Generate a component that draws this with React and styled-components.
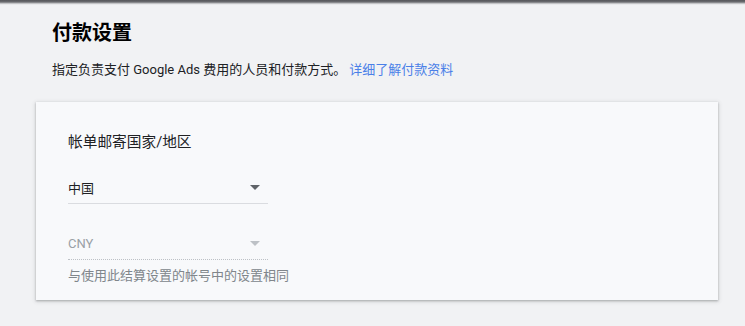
import React from "react";
import styled, { createGlobalStyle } from "styled-components";

const GlobalStyle = createGlobalStyle`
  body {
    margin: 0;
    background: #f1f2f4;
    font-family: Roboto, "Noto Sans CJK SC", sans-serif;
    color: #202124;
  }
`;

const Page = styled.div`
  width: 745px;
  height: 326px;
  display: flex;
  flex-direction: column;
  overflow: hidden;
`;

const TopShade = styled.div`
  height: 5px;
  background: linear-gradient(#55565a 0px, #6c6d71 2px, #a6a7aa 3px, #dfe0e2 4px, #f1f2f4 5px);
`;

const Content = styled.div`
  padding: 14px 27px 0 36px;
`;

const Header = styled.div`
  padding: 0 16px;
`;

const Title = styled.h1`
  margin: 0;
  font-size: 20px;
  line-height: 28px;
  font-weight: 700;
  color: #000;
`;

const Intro = styled.p`
  margin: 13px 0 0;
  font-size: 13px;
  line-height: 20px;
  color: #202124;
`;

const Link = styled.a`
  color: #4a80e8;
  text-decoration: none;
  margin-left: 3px;
`;

const Card = styled.div`
  margin-top: 22px;
  height: 198px;
  box-sizing: border-box;
  background: #f8f9fb;
  padding: 30px 32px 0;
  box-shadow: 0 1px 2px rgba(60, 64, 67, 0.35), 0 1px 4px 1px rgba(60, 64, 67, 0.12);
`;

const Label = styled.div`
  font-size: 14.7px;
  line-height: 20px;
  color: #202124;
`;

const Select = styled.div`
  width: 200px;
  height: 32px;
  margin-top: ${(p) => p.$top}px;
  box-sizing: border-box;
  display: flex;
  align-items: center;
  justify-content: space-between;
  padding-right: 8px;
  font-size: 13px;
  color: ${(p) => (p.$disabled ? "#9aa0a6" : "#202124")};
  border-bottom: 1px ${(p) => (p.$disabled ? "dotted #bdc1c6" : "solid #dadce0")};
`;

const Arrow = styled.span`
  width: 0;
  height: 0;
  border-left: 5px solid transparent;
  border-right: 5px solid transparent;
  border-top: 5px solid ${(p) => (p.$disabled ? "#bdc1c6" : "#5f6368")};
`;

const Hint = styled.div`
  margin-top: 6px;
  font-size: 13px;
  line-height: 20px;
  color: #80868b;
`;

export default function App() {
  return (
    <>
      <GlobalStyle />
      <Page>
        <TopShade />
        <Content>
          <Header>
            <Title>付款设置</Title>
            <Intro>
              指定负责支付 Google Ads 费用的人员和付款方式。
              <Link href="#">详细了解付款资料</Link>
            </Intro>
          </Header>
          <Card>
            <Label>帐单邮寄国家/地区</Label>
            <Select $top={20}>
              <span>中国</span>
              <Arrow />
            </Select>
            <Select $top={24} $disabled>
              <span>CNY</span>
              <Arrow $disabled />
            </Select>
            <Hint>与使用此结算设置的帐号中的设置相同</Hint>
          </Card>
        </Content>
      </Page>
    </>
  );
}
